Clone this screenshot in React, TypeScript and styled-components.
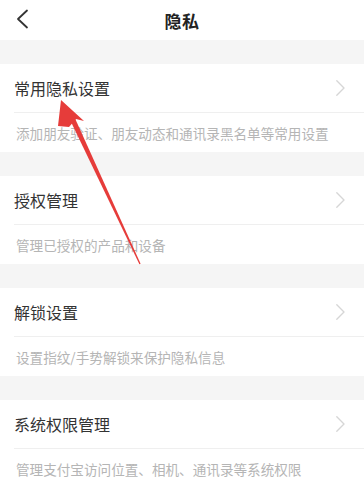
import styled, { createGlobalStyle } from 'styled-components';

const GlobalStyle = createGlobalStyle`
  html, body {
    margin: 0;
    padding: 0;
    background: #f5f5f5;
  }
  body {
    font-family: "Noto Sans CJK SC", "Noto Sans", sans-serif;
  }
`;

interface Item {
  title: string;
  desc: string;
}

const items: Item[] = [
  { title: '常用隐私设置', desc: '添加朋友验证、朋友动态和通讯录黑名单等常用设置' },
  { title: '授权管理', desc: '管理已授权的产品和设备' },
  { title: '解锁设置', desc: '设置指纹/手势解锁来保护隐私信息' },
  { title: '系统权限管理', desc: '管理支付宝访问位置、相机、通讯录等系统权限' },
];

const Chevron = ({ color, size }: { color: string; size: number }) => (
  <svg width={size * 0.6} height={size} viewBox="0 0 12 20" fill="none">
    <path d="M2 2 L10 10 L2 18" stroke={color} strokeWidth="1.5" strokeLinecap="round" strokeLinejoin="round" />
  </svg>
);

export default function App() {
  return (
    <>
      <GlobalStyle />
      <ScPage>
        <ScHeader>
          <ScBack>
            <svg width="14" height="20" viewBox="0 0 14 20" fill="none">
              <path d="M12 1.5 L3 10 L12 18.5" stroke="#333" strokeWidth="1.8" strokeLinecap="round" strokeLinejoin="round" />
            </svg>
          </ScBack>
          <ScTitle>隐私</ScTitle>
        </ScHeader>
        <ScList>
          {items.map(item => (
            <ScCard key={item.title}>
              <ScRow>
                <ScRowTitle>{item.title}</ScRowTitle>
                <Chevron color="#d6d6d6" size={18} />
              </ScRow>
              <ScDesc>{item.desc}</ScDesc>
            </ScCard>
          ))}
        </ScList>
        <ScArrow width="364" height="480" viewBox="0 0 364 480">
          <polygon points="140.6,263.7 139.4,264.3 69.6,119 74.4,117" fill="#e63c3a" />
          <path d="M61 100 L84 121 L76 119 L69 127 L58 126 Z" fill="#e63c3a" />
        </ScArrow>
      </ScPage>
    </>
  );
}

const ScPage = styled.div`
  position: relative;
  width: 364px;
  height: 480px;
  overflow: hidden;
  background: #f5f5f5;
`;

const ScHeader = styled.div`
  height: 40px;
  background: #fff;
  display: flex;
  align-items: center;
  justify-content: center;
  position: relative;
`;

const ScBack = styled.div`
  position: absolute;
  left: 15px;
  top: 9px;
  display: flex;
`;

const ScTitle = styled.div`
  font-size: 17px;
  font-weight: 700;
  color: #222;
  letter-spacing: 0.5px;
`;

const ScList = styled.div`
  display: flex;
  flex-direction: column;
  gap: 24px;
  padding-top: 24px;
`;

const ScCard = styled.div`
  background: #fff;
  padding-left: 14px;
`;

const ScRow = styled.div`
  height: 48px;
  display: flex;
  align-items: center;
  justify-content: space-between;
  padding-right: 18px;
  border-bottom: 1px solid #efefef;
`;

const ScRowTitle = styled.div`
  font-size: 16px;
  color: #333;
`;

const ScDesc = styled.div`
  height: 39px;
  display: flex;
  align-items: center;
  padding-left: 2px;
  font-size: 13.6px;
  color: #b5b5b5;
`;

const ScArrow = styled.svg`
  position: absolute;
  left: 0;
  top: 0;
  pointer-events: none;
`;
